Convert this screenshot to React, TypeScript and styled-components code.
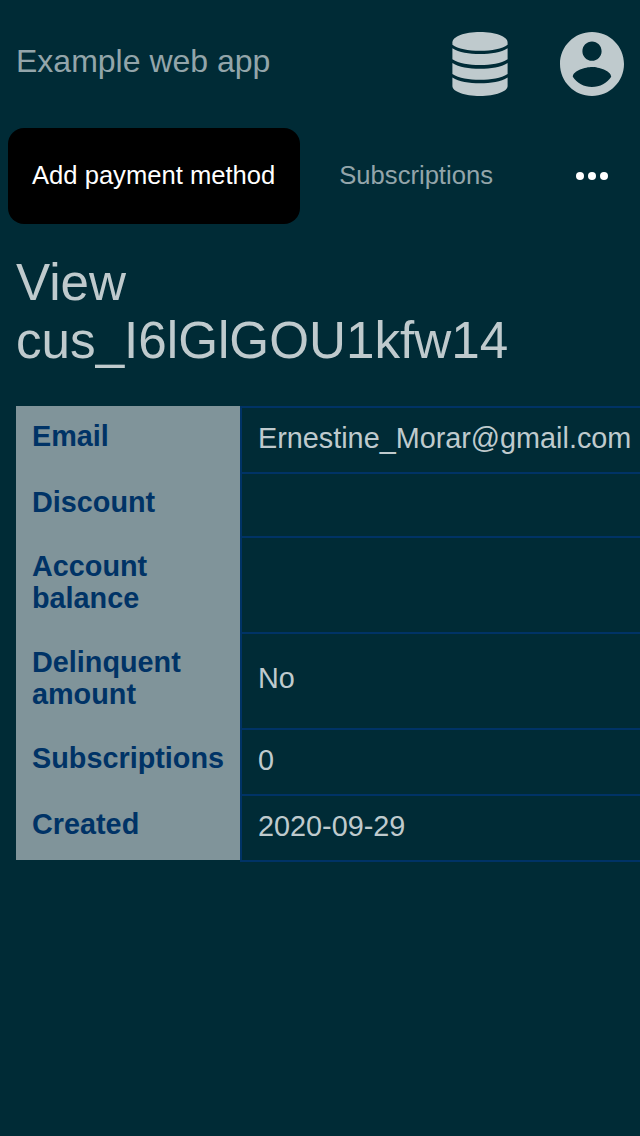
import React from "react";
import styled, { createGlobalStyle } from "styled-components";

const Global = createGlobalStyle`
  *, *::before, *::after { box-sizing: border-box; }
  body {
    margin: 0;
    background: #002b36;
    color: #bfcacd;
    font-family: "Liberation Sans", Arial, sans-serif;
    overflow: hidden;
  }
`;

const Page = styled.div`
  min-height: 1136px;
  overflow: hidden;
`;

const Header = styled.header`
  display: flex;
  align-items: center;
  height: 128px;
  padding: 0 16px;
`;

const AppName = styled.div`
  flex: 1;
  margin-top: -6px;
  font-size: 32px;
  line-height: 36px;
  color: #93a5aa;
`;

const HeaderIcon = styled.svg<{ $gap?: number }>`
  display: block;
  flex: none;
  margin-right: ${(p) => p.$gap ?? 0}px;
  fill: #bfcacd;
`;

const Nav = styled.nav`
  display: flex;
  height: 96px;
  padding-left: 8px;
`;

const NavItem = styled.a<{ $active?: boolean; $width: number; $inset: number }>`
  display: flex;
  align-items: center;
  width: ${(p) => p.$width}px;
  padding: 0 0 2px ${(p) => p.$inset}px;
  border-radius: 16px;
  font-size: 25.6px;
  line-height: 30px;
  white-space: nowrap;
  background: ${(p) => (p.$active ? "#000" : "transparent")};
  color: ${(p) => (p.$active ? "#fff" : "#93a5aa")};
`;

const More = styled.svg`
  display: block;
  margin: 40px 0 0 60px;
  fill: #fff;
`;

const Title = styled.h1`
  margin: 30px 16px 0;
  font-size: 51.2px;
  line-height: 58px;
  font-weight: 400;
`;

const Details = styled.dl`
  margin: 36px 0 0 16px;
  width: 640px;
`;

const Row = styled.div<{ $height: number }>`
  display: flex;
  height: ${(p) => p.$height}px;
`;

const Label = styled.dt`
  width: 224px;
  padding: 14px 16px 0;
  background: #80949a;
  color: #003366;
  font-size: 28.8px;
  line-height: 32px;
  font-weight: 700;
`;

const Value = styled.dd<{ $lift: number }>`
  display: flex;
  align-items: center;
  flex: 1;
  margin: 0;
  padding: 0 0 ${(p) => p.$lift}px 16px;
  border-top: 2px solid #003366;
  border-left: 2px solid #003366;
  font-size: 28.8px;
  line-height: 32px;
`;

const TableEnd = styled.div`
  height: 2px;
  margin-left: 224px;
  background: #003366;
`;

const rows = [
  { label: "Email", value: "Ernestine_Morar@gmail.com", height: 66 },
  { label: "Discount", value: "", height: 64 },
  { label: "Account balance", value: "", height: 96 },
  { label: "Delinquent amount", value: "No", height: 96 },
  { label: "Subscriptions", value: "0", height: 66 },
  { label: "Created", value: "2020-09-29", height: 66 },
];

export default function App() {
  return (
    <Page>
      <Global />
      <Header>
        <AppName>Example web app</AppName>
        <HeaderIcon $gap={52} width="56" height="64" viewBox="0 0 56 64">
          <path d="M.4 10.500C.4 4.500 12.500 0 28 0s27.600 4.500 27.600 10.500v2.200C50 16.800 40 18.800 28 18.800S6 16.800 .4 12.700z" />
          <path d="M.4 16.200C7 20.400 17 22 28 22S49 20.400 55.600 16.200v11C49 31.400 39 33 28 33S7 31.400 .4 27.200z" />
          <path d="M.4 30.900C7 35.100 17 36.700 28 36.700S49 35.100 55.600 30.900v11C49 46.100 39 47.700 28 47.700S7 46.100 .4 41.900z" />
          <path d="M.4 45.500C7 49.700 17 51.300 28 51.300S49 49.700 55.600 45.500v8.500C55.600 59.500 43.500 64 28 64S.4 59.500 .4 54z" />
        </HeaderIcon>
        <HeaderIcon width="64" height="64" viewBox="2 2 20 20">
          <path d="M12 2C6.48 2 2 6.48 2 12s4.48 10 10 10 10-4.48 10-10S17.52 2 12 2zm0 3c1.66 0 3 1.34 3 3s-1.34 3-3 3-3-1.34-3-3 1.34-3 3-3zm0 14.200c-2.500 0-4.710-1.280-6-3.220.03-1.990 4-3.080 6-3.080 1.990 0 5.970 1.090 6 3.080-1.290 1.940-3.500 3.220-6 3.220z" />
        </HeaderIcon>
      </Header>
      <Nav>
        <NavItem $active $width={292} $inset={24}>Add payment method</NavItem>
        <NavItem $width={216} $inset={39.3}>Subscriptions</NavItem>
        <More width="32" height="16" viewBox="0 0 32 16">
          <circle cx="4" cy="8" r="4" />
          <circle cx="16" cy="8" r="4" />
          <circle cx="28" cy="8" r="4" />
        </More>
      </Nav>
      <Title>View cus_I6lGlGOU1kfw14</Title>
      <Details>
        {rows.map((row) => (
          <Row key={row.label} $height={row.height}>
            <Label>{row.label}</Label>
            <Value $lift={row.height > 66 ? 6 : 4}>{row.value}</Value>
          </Row>
        ))}
        <TableEnd />
      </Details>
    </Page>
  );
}
